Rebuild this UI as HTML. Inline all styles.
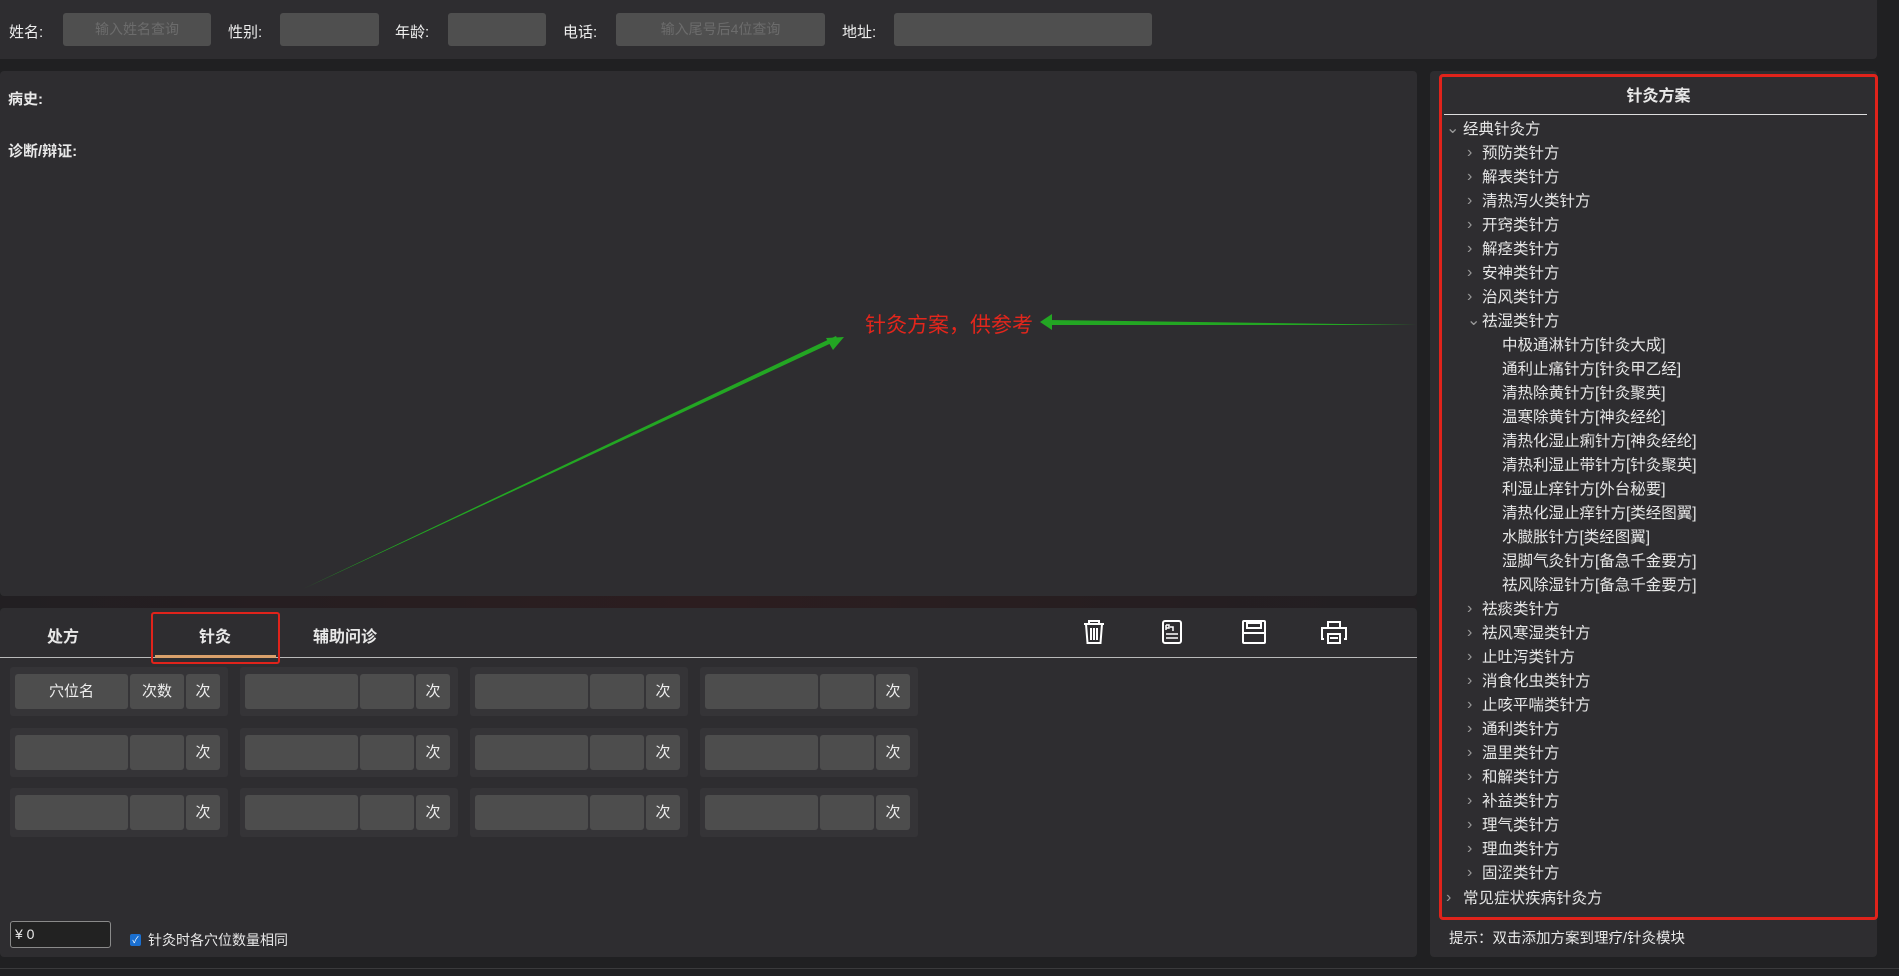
<!DOCTYPE html>
<html><head><meta charset="utf-8"><style>
*{box-sizing:border-box;margin:0;padding:0}
body{width:1899px;height:976px;background:#202022;position:relative;overflow:hidden;font-family:"Liberation Sans","Noto Sans CJK SC",sans-serif;color:#e8e8e8;font-size:15px}
.a{position:absolute}
.panel{position:absolute;background:#2e2d30;border-radius:4px}
.lbl{position:absolute;top:21px;font-size:15px;color:#eee}
.inp{position:absolute;top:13px;height:33px;background:#4f4f4f;border-radius:3px;color:#6c6c6c;font-size:14px;line-height:33px;text-align:center}
.grp{position:absolute;width:218px;height:49px;background:#353437;border-radius:3px}
.c{position:absolute;top:7px;height:35px;background:#4d4d4d;border-radius:3px;color:#eee;font-size:15px;line-height:35px;text-align:center}
.tree{position:absolute;left:1440px;top:118px;width:420px}
.r{height:24.03px;line-height:24px;font-size:15.5px;color:#e6e6e6;white-space:nowrap;position:relative}
.r i{position:absolute;font-style:normal;color:#9a9a9a;font-size:16px;top:-1px}
.l0{padding-left:23px}.l0 i{left:6px}
.l1{padding-left:42px}.l1 i{left:27px}
.l2{padding-left:62px}
</style></head><body>
<div class="panel" style="left:0;top:0;width:1877px;height:59px;border-radius:0 0 4px 0"></div>
<div class="lbl" style="left:9px">姓名:</div>
<div class="inp" style="left:63px;width:148px">输入姓名查询</div>
<div class="lbl" style="left:228px">性别:</div>
<div class="inp" style="left:280px;width:99px"></div>
<div class="lbl" style="left:395px">年龄:</div>
<div class="inp" style="left:448px;width:98px"></div>
<div class="lbl" style="left:563px">电话:</div>
<div class="inp" style="left:616px;width:209px">输入尾号后4位查询</div>
<div class="lbl" style="left:842px">地址:</div>
<div class="inp" style="left:894px;width:258px"></div>

<div class="panel" style="left:0;top:71px;width:1417px;height:525px"></div>
<div class="a" style="left:8px;top:88px;font-weight:bold;font-size:15px">病史:</div>
<div class="a" style="left:8px;top:140px;font-weight:bold;font-size:15px">诊断/辩证:</div>
<div class="a" style="left:0;top:596px;width:1417px;height:12px;background:linear-gradient(90deg,#221f22,#2c1d1f 50%,#221f22)"></div>

<div class="a" style="left:865px;top:309px;color:#e3261c;font-size:21px">针灸方案，供参考</div>
<svg class="a" style="left:0;top:0" width="1899" height="976">
<polygon points="303,589 838,340 836,336" fill="#23a623"/>
<polygon points="844,337 826,338 833,350" fill="#23a623"/>
<polygon points="1417,325 1048,320 1048,325" fill="#23a623"/>
<polygon points="1040,322 1052,314 1052,330" fill="#23a623"/>
</svg>

<div class="panel" style="left:0;top:608px;width:1417px;height:349px"></div>
<div class="a" style="left:47px;top:623px;font-weight:bold;font-size:16px">处方</div>
<div class="a" style="left:199px;top:623px;font-weight:bold;font-size:16px">针灸</div>
<div class="a" style="left:313px;top:623px;font-weight:bold;font-size:16px">辅助问诊</div>
<div class="a" style="left:0;top:657px;width:1417px;height:1px;background:#b9b9b9"></div>
<div class="a" style="left:155px;top:655px;width:121px;height:3px;background:#d9a06b"></div>
<div class="a" style="left:151px;top:612px;width:129px;height:52px;border:2px solid #e0231b;border-radius:3px"></div>
<svg class="a" style="left:1080px;top:618px" width="270" height="28" fill="none" stroke="#fff" stroke-width="2">
<path d="M4 6h20M9 6V3h10v3M6 6l1.5 19h13L22 6M11 10v12M14 10v12M17 10v12"/>
<rect x="83" y="3" width="18" height="22" rx="2"/><path d="M86 16h12M86 20h12M86 7v5M86 7h3v3h-3M90 9h3v4" stroke-width="1.5"/>
<rect x="163" y="3" width="22" height="22" rx="1"/><rect x="167" y="5" width="14" height="5"/><path d="M163 15h22"/>
<path d="M248 9V4h12v5M244 21h-2V10h24v11h-2M248 16h12v9h-12zM250 20h8"/>
</svg>

<div class="grp" style="left:10px;top:667px"><div class="c" style="left:5px;width:113px">穴位名</div><div class="c" style="left:120px;width:54px">次数</div><div class="c" style="left:176px;width:34px">次</div></div>
<div class="grp" style="left:240px;top:667px"><div class="c" style="left:5px;width:113px"></div><div class="c" style="left:120px;width:54px"></div><div class="c" style="left:176px;width:34px">次</div></div>
<div class="grp" style="left:470px;top:667px"><div class="c" style="left:5px;width:113px"></div><div class="c" style="left:120px;width:54px"></div><div class="c" style="left:176px;width:34px">次</div></div>
<div class="grp" style="left:700px;top:667px"><div class="c" style="left:5px;width:113px"></div><div class="c" style="left:120px;width:54px"></div><div class="c" style="left:176px;width:34px">次</div></div>
<div class="grp" style="left:10px;top:728px"><div class="c" style="left:5px;width:113px"></div><div class="c" style="left:120px;width:54px"></div><div class="c" style="left:176px;width:34px">次</div></div>
<div class="grp" style="left:240px;top:728px"><div class="c" style="left:5px;width:113px"></div><div class="c" style="left:120px;width:54px"></div><div class="c" style="left:176px;width:34px">次</div></div>
<div class="grp" style="left:470px;top:728px"><div class="c" style="left:5px;width:113px"></div><div class="c" style="left:120px;width:54px"></div><div class="c" style="left:176px;width:34px">次</div></div>
<div class="grp" style="left:700px;top:728px"><div class="c" style="left:5px;width:113px"></div><div class="c" style="left:120px;width:54px"></div><div class="c" style="left:176px;width:34px">次</div></div>
<div class="grp" style="left:10px;top:788px"><div class="c" style="left:5px;width:113px"></div><div class="c" style="left:120px;width:54px"></div><div class="c" style="left:176px;width:34px">次</div></div>
<div class="grp" style="left:240px;top:788px"><div class="c" style="left:5px;width:113px"></div><div class="c" style="left:120px;width:54px"></div><div class="c" style="left:176px;width:34px">次</div></div>
<div class="grp" style="left:470px;top:788px"><div class="c" style="left:5px;width:113px"></div><div class="c" style="left:120px;width:54px"></div><div class="c" style="left:176px;width:34px">次</div></div>
<div class="grp" style="left:700px;top:788px"><div class="c" style="left:5px;width:113px"></div><div class="c" style="left:120px;width:54px"></div><div class="c" style="left:176px;width:34px">次</div></div>

<div class="a" style="left:10px;top:921px;width:101px;height:27px;border:1px solid #8a8a8a;border-radius:3px;background:#222;font-size:14px;line-height:25px;padding-left:4px">¥ 0</div>
<div class="a" style="left:130px;top:934px;width:11px;height:12px;background:#1a6fd0;border-radius:2px;color:#fff;font-size:9px;line-height:12px;text-align:center">✓</div>
<div class="a" style="left:148px;top:930px;font-size:14px">针灸时各穴位数量相同</div>
<div class="a" style="left:0;top:968px;width:1899px;height:1px;background:#3a3a3c"></div>

<div class="panel" style="left:1430px;top:71px;width:447px;height:886px"></div>
<div class="a" style="left:1439px;top:74px;width:439px;height:846px;border:3px solid #e0231b;border-radius:4px"></div>
<div class="a" style="left:1439px;top:82px;width:439px;text-align:center;font-weight:bold;font-size:16px">针灸方案</div>
<div class="a" style="left:1444px;top:114px;width:423px;height:1px;background:#ddd"></div>
<div class="tree">
<div class="r l0"><i>⌄</i>经典针灸方</div>
<div class="r l1"><i>›</i>预防类针方</div>
<div class="r l1"><i>›</i>解表类针方</div>
<div class="r l1"><i>›</i>清热泻火类针方</div>
<div class="r l1"><i>›</i>开窍类针方</div>
<div class="r l1"><i>›</i>解痉类针方</div>
<div class="r l1"><i>›</i>安神类针方</div>
<div class="r l1"><i>›</i>治风类针方</div>
<div class="r l1"><i>⌄</i>祛湿类针方</div>
<div class="r l2">中极通淋针方[针灸大成]</div>
<div class="r l2">通利止痛针方[针灸甲乙经]</div>
<div class="r l2">清热除黄针方[针灸聚英]</div>
<div class="r l2">温寒除黄针方[神灸经纶]</div>
<div class="r l2">清热化湿止痢针方[神灸经纶]</div>
<div class="r l2">清热利湿止带针方[针灸聚英]</div>
<div class="r l2">利湿止痒针方[外台秘要]</div>
<div class="r l2">清热化湿止痒针方[类经图翼]</div>
<div class="r l2">水臌胀针方[类经图翼]</div>
<div class="r l2">湿脚气灸针方[备急千金要方]</div>
<div class="r l2">祛风除湿针方[备急千金要方]</div>
<div class="r l1"><i>›</i>祛痰类针方</div>
<div class="r l1"><i>›</i>祛风寒湿类针方</div>
<div class="r l1"><i>›</i>止吐泻类针方</div>
<div class="r l1"><i>›</i>消食化虫类针方</div>
<div class="r l1"><i>›</i>止咳平喘类针方</div>
<div class="r l1"><i>›</i>通利类针方</div>
<div class="r l1"><i>›</i>温里类针方</div>
<div class="r l1"><i>›</i>和解类针方</div>
<div class="r l1"><i>›</i>补益类针方</div>
<div class="r l1"><i>›</i>理气类针方</div>
<div class="r l1"><i>›</i>理血类针方</div>
<div class="r l1"><i>›</i>固涩类针方</div>
<div class="r l0"><i>›</i>常见症状疾病针灸方</div>
</div>
<div class="a" style="left:1449px;top:927px;font-size:14.5px">提示：双击添加方案到理疗/针灸模块</div>
</body></html>
